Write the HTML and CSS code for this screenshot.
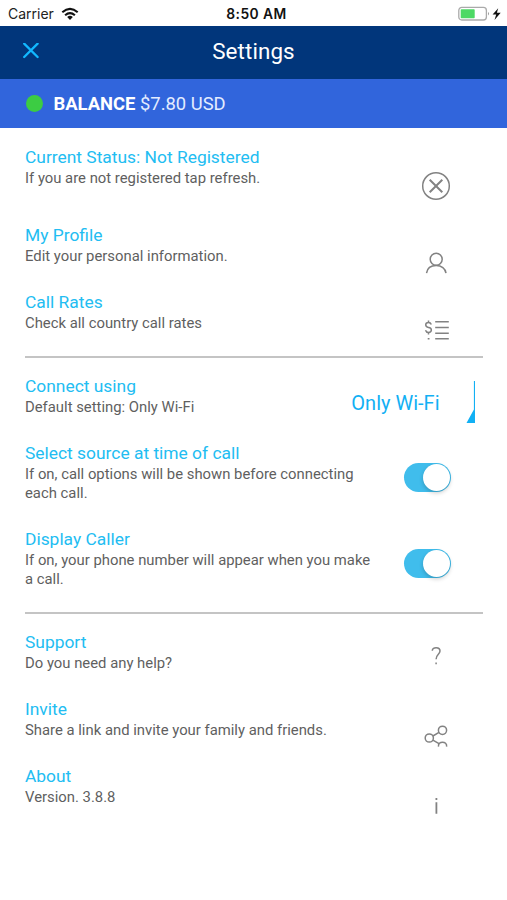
FILE: index.html
```html
<!DOCTYPE html>
<html lang="en">
<head>
<meta charset="utf-8">
<title>Settings</title>
<link rel="stylesheet" href="styles.css">
</head>
<body>
<div class="status">
  <div class="carrier"><span>Carrier</span>
    <svg width="18" height="14" viewBox="0 0 18 14" fill="none" stroke="#111" stroke-width="2.1"><path d="M1.3 5.2Q9 -1.5 16.7 5.2M4.1 8.3Q9 4 13.9 8.3"/><path d="M6.2 10Q9 7.7 11.8 10L9 13Z" fill="#111" stroke="none"/></svg>
  </div>
  <div class="clock">8:50 AM</div>
  <svg class="battery" width="44" height="16" viewBox="0 0 44 16"><rect x=".8" y="1.4" width="27.6" height="12.6" rx="3" fill="#fff" stroke="#aaa" stroke-width="1.3"/><rect x="2.7" y="3.3" width="14" height="9" rx=".8" fill="#4cd964"/><path d="M30 6q2 1.7 0 3.5z" fill="#999"/><path d="M40.2 2.2L34.6 8.6h3.6l-1.7 5.5 6.2-7.3h-3.8z" fill="#111"/></svg>
</div>
<header class="header">
  <svg class="close" width="16" height="16" viewBox="0 0 16 16" stroke="#12b8ff" stroke-width="2.3" stroke-linecap="round"><path d="M1.2 .6L14.6 14M14.6 .6L1.2 14"/></svg>
  <h1>Settings</h1>
</header>
<div class="balance"><i class="dot"></i><p><b>BALANCE</b> <span>$7.80 USD</span></p></div>
<main>
  <section class="group first">
    <div class="row status-row"><div class="text"><h2>Current Status: Not Registered</h2><p>If you are not registered tap refresh.</p></div>
      <svg class="icon" viewBox="0 0 30 30"><circle cx="15" cy="15" r="13.3"/><path class="thick" d="M8.7 8.7L21.3 21.3M21.3 8.7L8.7 21.3"/></svg></div>
    <div class="row"><div class="text"><h2>My Profile</h2><p>Edit your personal information.</p></div>
      <svg class="icon" viewBox="0 0 30 30"><circle cx="15.2" cy="11.3" r="6"/><path d="M5.5 25.2C6.2 20.5 10 17.6 15.2 17.6S24.5 20.5 25 25.2"/></svg></div>
    <div class="row rates"><div class="text"><h2>Call Rates</h2><p>Check all country call rates</p></div>
      <svg class="icon" viewBox="0 0 30 30"><path d="M14.2 6.7H27.8M14.2 12.4H27.8M14.2 18.2H27.8M14.2 23.7H27.8M6.7 23.7H8.5"/><path d="M10.3 9.5C9.7 7.9 8.7 7.5 7.5 7.5C3.8 7.5 3.8 12 7.5 12.4C11.3 12.8 11.3 17.4 7.5 17.4C6 17.4 5 16.7 4.5 15.2M7.5 5.5V7.5M7.5 17.4V19.5"/></svg></div>
  </section>
  <section class="group second">
    <div class="row"><div class="text"><h2>Connect using</h2><p>Default setting: Only Wi-Fi</p></div>
      <div class="select"><span>Only Wi-Fi</span><svg width="10" height="44" viewBox="0 0 10 44" fill="#12b0f4"><path d="M7.9 1H9V43H.5L7.9 29.5Z"/></svg></div></div>
    <div class="row tall"><div class="text"><h2>Select source at time of call</h2><p>If on, call options will be shown before connecting<br>each call.</p></div>
      <div class="toggle"><i></i></div></div>
    <div class="row"><div class="text"><h2>Display Caller</h2><p>If on, your phone number will appear when you make<br>a call.</p></div>
      <div class="toggle"><i></i></div></div>
  </section>
  <section class="group">
    <div class="row help"><div class="text"><h2>Support</h2><p>Do you need any help?</p></div>
      <svg class="icon" viewBox="0 0 30 30"><path d="M11.3 9.7C11.3 5.6 19 5.6 19 10C19 13.3 15.1 13.3 15.1 18.2M15.1 21.5V23.2"/></svg></div>
    <div class="row"><div class="text"><h2>Invite</h2><p>Share a link and invite your family and friends.</p></div>
      <svg class="icon share" viewBox="0 0 30 30"><circle cx="8.3" cy="16" r="4.1"/><circle cx="21.5" cy="8.3" r="4.1"/><path d="M11.9 14L18 10.4M11.9 18.1L18 21.7M17.5 24.7C16.5 18.6 26.5 18.6 25.6 24.7"/></svg></div>
    <div class="row"><div class="text"><h2>About</h2><p>Version. 3.8.8</p></div>
      <svg class="icon about" viewBox="0 0 30 30"><path class="info" d="M15.4 11.2V22.7M15.4 7V8.9"/></svg></div>
  </section>
</main>
</body>
</html>
```
FILE: styles.css
```css
* { box-sizing: border-box; }
body { margin: 0; background: #fff; font-family: Roboto, "Liberation Sans", sans-serif; color: #5f5f5f; }
h1, h2, p { margin: 0; font-weight: 400; white-space: nowrap; }
svg { display: block; flex: none; }
.status { height: 25.5px; display: grid; grid-template-columns: 1fr auto 1fr; align-items: center; padding: 2px 5px 0 8px; font-family: Inter, sans-serif; color: #222; }
.carrier { display: flex; gap: 7px; align-items: center; }
.carrier span { font-size: 14px; }
.clock { font-size: 13.8px; font-weight: 600; letter-spacing: .45px; color: #111; padding-left: 3px; }
.battery { justify-self: end; }
.header { height: 53.5px; background: #01367b; display: grid; grid-template-columns: 1fr auto 1fr; align-items: center; padding: 0 23px 3px; }
.header h1 { font-size: 22.4px; letter-spacing: .1px; color: #fff; line-height: 28px; }
.balance { height: 48.5px; background: #3165dc; display: flex; align-items: center; gap: 10.5px; padding: 1px 0 0 26px; color: #fff; font-size: 18.4px; }
.balance span { color: #e3ecff; }
.balance b { font-weight: 700; }
.dot { width: 17px; height: 17px; border-radius: 50%; background: #3ccc43; }
main { padding: 0 24px 0 25px; }
.group { padding-top: 17px; border-top: 2px solid #c4c4c4; }
.first { padding-top: 18.4px; border-top: 0; height: 228.5px; }
.second { height: 256px; padding-top: 17px; }
.row { height: 67px; display: flex; justify-content: space-between; align-items: flex-start; }
.status-row { height: 78px; }
.tall { height: 86px; }
h2 { font-size: 17.4px; line-height: 22px; color: #22bdf2; }
.text p { font-size: 14.85px; line-height: 19.5px; padding-top: .9px; }
.second .text p { padding-top: .5px; }
.icon { width: 30px; height: 30px; margin: 24px 32.5px 0 0; fill: none; stroke: #828282; stroke-width: 1.5; }
.icon .thick { stroke-width: 2; }
.icon .info { stroke-width: 1.8; }
.status-row .icon { margin-top: 25.5px; }
.rates .icon { margin-top: 24.6px; }
.help .icon { margin-top: 9.5px; }
.icon.about { margin-top: 25.5px; }
.select { display: flex; align-items: center; margin: 5px 7.5px 0 0; gap: 26px; font-size: 20px; color: #12b0f4; }
.select span { padding-top: 2px; }
.toggle { width: 47px; height: 29px; border-radius: 15px; background: #40bdec; margin: 20.5px 32px 0 0; padding: 1px; display: flex; justify-content: flex-end; flex: none; }
.toggle i { width: 27px; height: 27px; border-radius: 50%; background: #fff; box-shadow: 0 2px 4px rgba(0,0,0,.2); }
```
